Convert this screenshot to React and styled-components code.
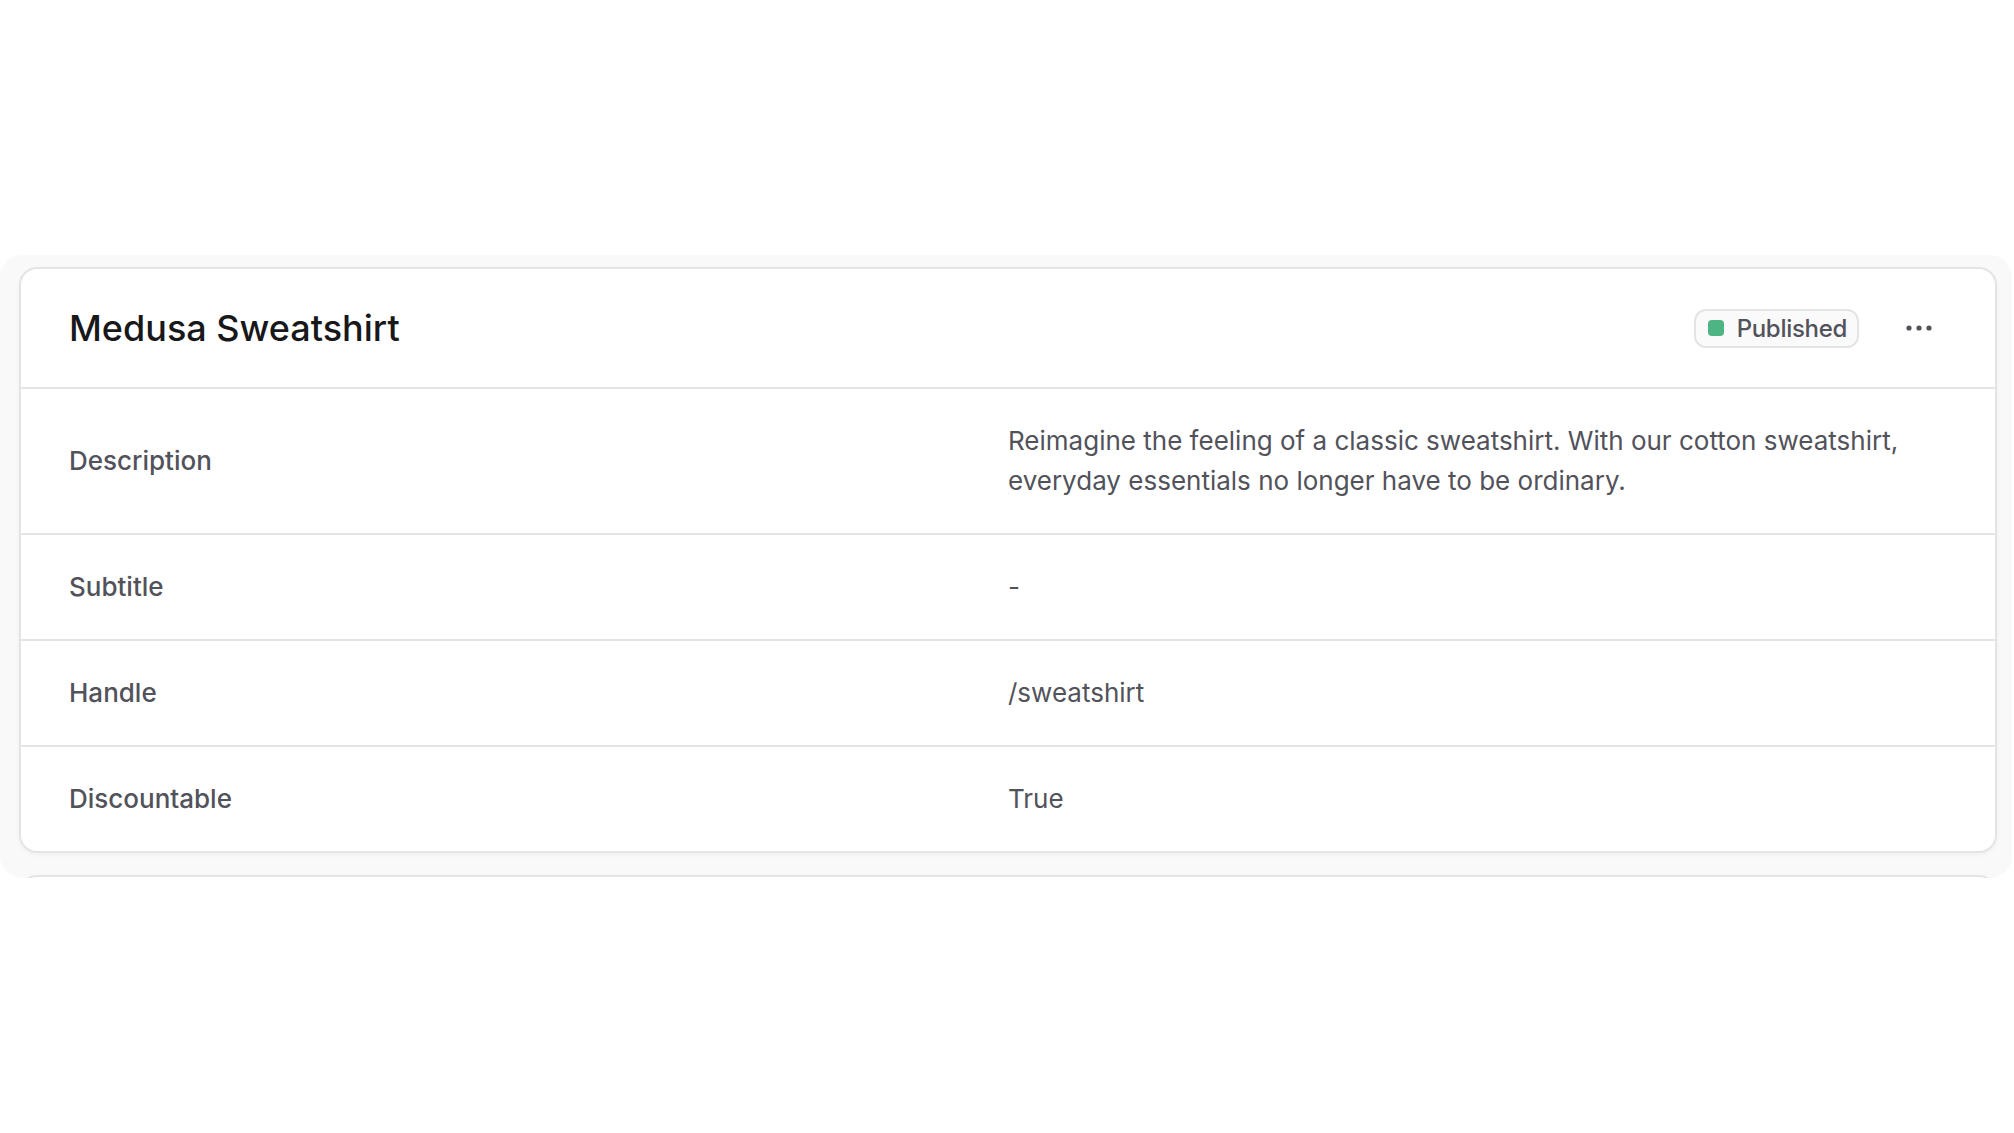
import styled, { createGlobalStyle } from "styled-components";

const GlobalStyle = createGlobalStyle`
  html, body {
    margin: 0;
    padding: 0;
    background: #ffffff;
    font-family: Inter, "Noto Sans", sans-serif;
    -webkit-font-smoothing: antialiased;
  }
`;

const Page = styled.div`
  width: 2014px;
  height: 1133px;
  padding-top: 255px;
  box-sizing: border-box;
  overflow: hidden;
`;

const Panel = styled.div`
  width: 2012px;
  height: 623px;
  box-sizing: border-box;
  padding: 12px 15px 0 19px;
  background: #f9f9fa;
  border-radius: 22px;
  overflow: hidden;
  display: flex;
  flex-direction: column;
  gap: 22px;
`;

const Card = styled.section`
  flex-shrink: 0;
  min-height: ${(props) => props.minHeight || "0"};
  background: #ffffff;
  border: 2px solid #e4e4e7;
  border-radius: 18px;
  box-shadow: 0 2px 4px rgba(0, 0, 0, 0.04);
  overflow: hidden;
`;

const Header = styled.header`
  display: flex;
  align-items: center;
  justify-content: space-between;
  height: 120px;
  box-sizing: border-box;
  padding: 0 48px;
  border-bottom: 2px solid #e4e4e7;
`;

const Title = styled.h2`
  margin: 0;
  font-size: 36px;
  line-height: 56px;
  font-weight: 500;
  color: #18181b;
`;

const Actions = styled.div`
  display: flex;
  align-items: center;
  gap: 32px;
`;

const Badge = styled.span`
  display: inline-flex;
  align-items: center;
  gap: 13px;
  height: 39px;
  box-sizing: border-box;
  padding: 0 10px 0 12px;
  background: #fafafa;
  border: 2px solid #e4e4e7;
  border-radius: 12px;
  font-size: 24px;
  font-weight: 500;
  letter-spacing: -0.3px;
  color: #52525b;
`;

const Dot = styled.span`
  width: 16px;
  height: 16px;
  border-radius: 4px;
  background: ${(props) => props.color};
`;

const IconButton = styled.button`
  width: 56px;
  height: 56px;
  padding: 0;
  border: none;
  background: transparent;
  border-radius: 12px;
  display: flex;
  align-items: center;
  justify-content: center;
  color: #52525b;
  cursor: pointer;
`;

const Row = styled.div`
  display: grid;
  grid-template-columns: 1fr 1fr;
  align-items: center;
  padding: 32px 48px;
  border-bottom: 2px solid #e4e4e7;

  &:last-child {
    border-bottom: none;
  }
`;

const Label = styled.span`
  font-size: 26px;
  line-height: 40px;
  font-weight: 500;
  color: #52525b;
`;

const Value = styled.span`
  font-size: 26px;
  line-height: 40px;
  font-weight: 400;
  color: #52525b;
`;

const EllipsisIcon = () => (
  <svg width="30" height="8" viewBox="0 0 30 8" fill="currentColor">
    <circle cx="5" cy="4" r="2.6" />
    <circle cx="15" cy="4" r="2.6" />
    <circle cx="25" cy="4" r="2.6" />
  </svg>
);

const fields = [
  {
    label: "Description",
    value:
      "Reimagine the feeling of a classic sweatshirt. With our cotton sweatshirt, everyday essentials no longer have to be ordinary.",
  },
  { label: "Subtitle", value: "-" },
  { label: "Handle", value: "/sweatshirt" },
  { label: "Discountable", value: "True" },
];

const App = () => {
  return (
    <Page>
      <GlobalStyle />
      <Panel>
        <Card>
          <Header>
            <Title>Medusa Sweatshirt</Title>
            <Actions>
              <Badge>
                <Dot color="#4db583" />
                Published
              </Badge>
              <IconButton aria-label="More actions">
                <EllipsisIcon />
              </IconButton>
            </Actions>
          </Header>
          {fields.map((f) => (
            <Row key={f.label}>
              <Label>{f.label}</Label>
              <Value>{f.value}</Value>
            </Row>
          ))}
        </Card>
        {/* next card, mostly clipped by the panel */}
        <Card minHeight="200px" />
      </Panel>
    </Page>
  );
};

export default App;
